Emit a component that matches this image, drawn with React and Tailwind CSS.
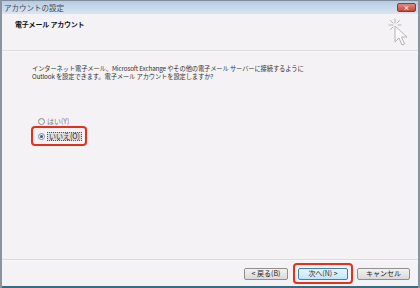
import React from 'react';

const jp = { fontFamily: '"Noto Sans CJK JP", "Liberation Sans", sans-serif' };

function WizardIcon() {
  return (
    <svg width="24" height="30" viewBox="0 0 24 30" className="text-[#b4b4b8]">
      {/* sparkle rays */}
      <g stroke="currentColor" strokeWidth="1" strokeLinecap="round">
        <line x1="7" y1="1" x2="7" y2="5" />
        <line x1="1" y1="7" x2="5" y2="7" />
        <line x1="2.5" y1="2.5" x2="5" y2="5" />
        <line x1="11.5" y1="2.5" x2="9" y2="5" />
        <line x1="2.5" y1="11.5" x2="5" y2="9" />
        <line x1="13" y1="7" x2="10" y2="7" />
      </g>
      {/* arrow cursor */}
      <path
        d="M7 8 L7 24 L11 20 L14 27 L16.5 26 L13.5 19 L19 19 Z"
        fill="#fafafa"
        stroke="currentColor"
        strokeWidth="1"
        strokeLinejoin="round"
      />
    </svg>
  );
}

function Radio({ checked }) {
  return (
    <span className="w-[7px] h-[7px] rounded-full border border-[#8a8a8a] bg-gradient-to-b from-[#e4e4e4] to-white flex items-center justify-center shrink-0">
      {checked && <span className="w-[3px] h-[3px] rounded-full bg-[#2060b0]" />}
    </span>
  );
}

function Button({ children, primary, className }) {
  return (
    <div
      className={
        'h-[12px] flex items-center justify-center rounded-[2px] border text-[7px] leading-none text-[#222] ' +
        (primary
          ? 'border-[#3c7fb1] bg-gradient-to-b from-[#eaf6fd] to-[#bee6fd] '
          : 'border-[#8e8f8f] bg-gradient-to-b from-[#f2f2f2] to-[#d9d9d9] ') +
        className
      }
    >
      {children}
    </div>
  );
}

export default function App() {
  return (
    <div
      className="w-[420px] h-[288px] flex flex-col bg-[#f5f2f5] border-l-2 border-r-2 border-[#8a949e] overflow-hidden"
      style={jp}
    >
      {/* Title bar */}
      <div className="h-[14px] shrink-0 flex items-center justify-between bg-gradient-to-b from-[#b6cbe2] to-[#d9e6f3] border-t border-[#7d8c9c] pl-[2px] pr-[2px]">
        <span className="text-[7.5px] leading-none text-[#3e4a56]">アカウントの設定</span>
        <div className="w-[19px] h-[9px] rounded-[2px] border border-[#8a3a30] bg-gradient-to-b from-[#e0897c] to-[#c24a3a] flex items-center justify-center">
          <span className="text-[6px] leading-none text-white font-bold">×</span>
        </div>
      </div>

      {/* Header */}
      <div className="h-[36px] shrink-0 flex justify-between pl-[13px] pr-[6px]">
        <span className="pt-[7px] text-[7px] font-bold leading-none text-[#111] tracking-[-0.2px]">
          電子メール アカウント
        </span>
        <div className="pt-[4px]">
          <WizardIcon />
        </div>
      </div>
      <div className="h-[2px] shrink-0 bg-[#dcdadc] border-b border-[#f9f9f9]" />

      {/* Body */}
      <div className="flex-1 flex flex-col pl-[30px] pt-[13px]">
        <div className="text-[6.3px] leading-[7.5px] text-[#333] whitespace-nowrap tracking-[-0.15px]">
          <div>インターネット電子メール、Microsoft Exchange やその他の電子メール サーバーに接続するように</div>
          <div>Outlook を設定できます。電子メール アカウントを設定しますか?</div>
        </div>

        <div className="mt-[37px] flex flex-col gap-[7px] pl-[6px]">
          <div className="flex items-center gap-[2px] h-[8px]">
            <Radio />
            <span className="text-[7px] leading-none text-[#7a7a7a]">はい(Y)</span>
          </div>
          <div className="relative flex items-center gap-[2px] h-[8px]">
            <Radio checked />
            <span className="text-[7px] leading-none text-[#222] bg-[#dcdcdc] border border-dotted border-[#555] px-[1px]">
              いいえ(O)
            </span>
            <div className="absolute left-[-7px] top-[-6px] w-[56px] h-[20px] rounded-[4px] border-[2.5px] border-[#e2321e]" />
          </div>
        </div>
      </div>

      {/* Footer */}
      <div className="h-[2px] shrink-0 bg-[#dcdadc] border-b border-[#f9f9f9]" />
      <div className="h-[25px] shrink-0 flex items-center justify-end pr-[8px]">
        <Button className="w-[44px]">&lt; 戻る(B)</Button>
        <div className="relative ml-[10px]">
          <Button primary className="w-[50px]">次へ(N) &gt;</Button>
          <div className="absolute left-[-5px] top-[-5px] w-[60px] h-[21px] rounded-[4px] border-[2.5px] border-[#e2321e]" />
        </div>
        <Button className="w-[53px] ml-[9px]">キャンセル</Button>
      </div>
      <div className="h-[2px] shrink-0 bg-[#2f6e84]" />
    </div>
  );
}
